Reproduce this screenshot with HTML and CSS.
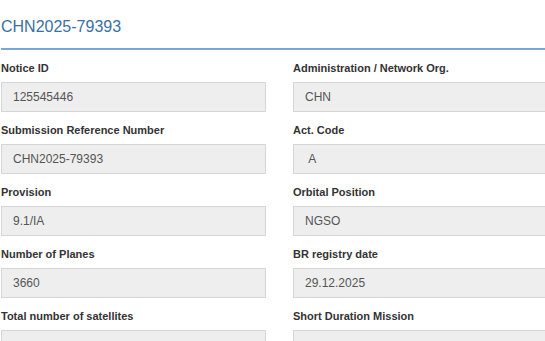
FILE: index.html
```html
<!DOCTYPE html>
<html>
<head>
<meta charset="utf-8">
<link rel="stylesheet" href="styles.css">
</head>
<body>
<div class="page">
  <h1 class="title">CHN2025-79393</h1>
  <div class="grid">
    <div class="field"><div class="label">Notice ID</div><div class="box">125545446</div></div>
    <div class="field"><div class="label">Administration / Network Org.</div><div class="box">CHN</div></div>
    <div class="field"><div class="label">Submission Reference Number</div><div class="box">CHN2025-79393</div></div>
    <div class="field"><div class="label">Act. Code</div><div class="box">&nbsp;A</div></div>
    <div class="field"><div class="label">Provision</div><div class="box">9.1/IA</div></div>
    <div class="field"><div class="label">Orbital Position</div><div class="box">NGSO</div></div>
    <div class="field"><div class="label">Number of Planes</div><div class="box">3660</div></div>
    <div class="field"><div class="label">BR registry date</div><div class="box">29.12.2025</div></div>
    <div class="field"><div class="label">Total number of satellites</div><div class="box"></div></div>
    <div class="field"><div class="label">Short Duration Mission</div><div class="box"></div></div>
  </div>
</div>
</body>
</html>
```
FILE: styles.css
```css
html, body {
  margin: 0;
  padding: 0;
  background: #fff;
  overflow: hidden;
}
body {
  font-family: "Liberation Sans", Arial, sans-serif;
}
.page {
  width: 600px;
  padding-left: 1px;
}
.title {
  margin: 0;
  padding-top: 17px;
  padding-bottom: 11px;
  font-size: 16px;
  line-height: 20px;
  font-weight: normal;
  color: #3a70a3;
  border-bottom: 2px solid #7ba6d3;
}
.grid {
  display: grid;
  grid-template-columns: 265px 265px;
  column-gap: 27px;
  row-gap: 11px;
  padding-top: 11px;
}
.label {
  font-size: 11px;
  line-height: 15px;
  font-weight: bold;
  color: #333;
  margin-bottom: 6px;
}
.box {
  box-sizing: border-box;
  height: 30px;
  border: 1px solid #d6d6d6;
  background: #eeeeee;
  padding: 0 11px;
  font-size: 12px;
  line-height: 28px;
  color: #555;
}
```
